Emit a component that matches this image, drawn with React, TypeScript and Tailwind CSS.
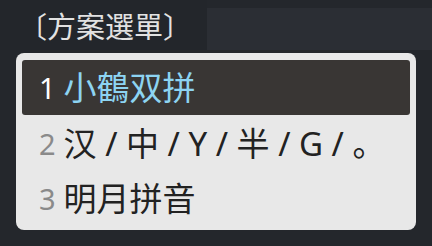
import React from 'react';

const font = { fontFamily: '"Noto Sans", "Noto Sans CJK SC", sans-serif' };
const preeditFont = { fontFamily: '"Noto Sans CJK SC", sans-serif' };

const candidates = [
  { label: '1', text: '小鶴双拼' },
  { label: '2', text: '汉 / 中 / Y / 半 / G / 。' },
  { label: '3', text: '明月拼音' },
];

const App: React.FC = () => {
  return (
    <div className="w-[432px] h-[246px] bg-[#24272c] overflow-hidden" style={font}>
      {/* preedit line */}
      <div className="flex h-[50px]">
        <div className="w-[207px] h-full bg-[#23262b] flex items-center pl-[18px]">
          <span className="text-[29px] leading-none text-[#e2e2e2]" style={preeditFont}>〔方案選單〕</span>
        </div>
        <div className="flex-1 mt-[8px] bg-[#2b2e34]" />
      </div>

      {/* candidate panel */}
      <div className="ml-[16px] mt-[3px] w-[400px] h-[177px] rounded-[8px] bg-[#e8e8e8] px-[6px] pt-[7px]">
        {candidates.map((c, i) => {
          const active = i === 0;
          return (
            <div
              key={c.label}
              className={`h-[55px] flex items-center pl-[17px] rounded-[3px] ${active ? 'bg-[#393634]' : ''} ${i === 1 ? 'mt-[1px]' : ''}`}
            >
              <span className={`text-[29px] leading-none mr-[8px] ${active ? 'text-white' : 'text-[#8a8a8a]'}`}>
                {c.label}
              </span>
              <span className={`text-[33px] leading-none whitespace-pre ${active ? 'text-[#8dd4f2]' : 'text-[#222222]'}`}>
                {c.text}
              </span>
            </div>
          );
        })}
      </div>
    </div>
  );
};

export default App;
